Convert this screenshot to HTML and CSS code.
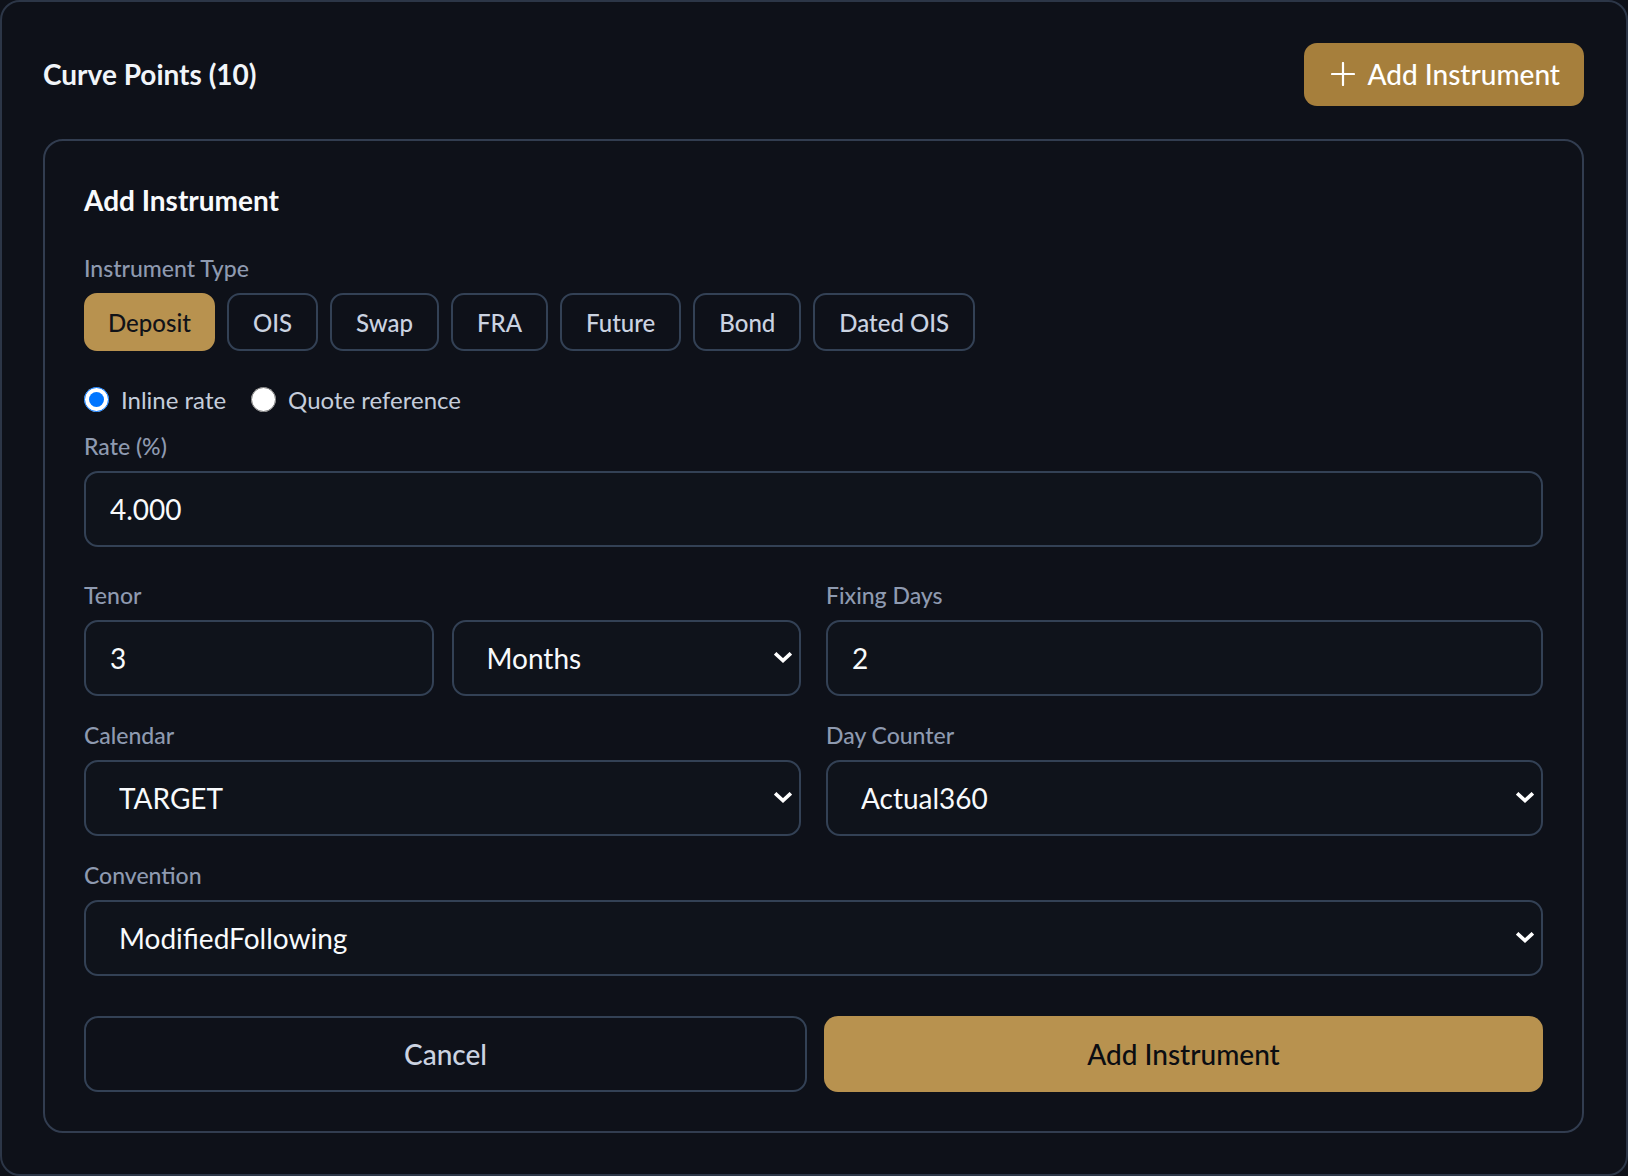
FILE: index.html
```html
<!DOCTYPE html>
<html lang="en">

<head>
    <meta charset="UTF-8">
    <meta name="viewport" content="width=device-width, initial-scale=1.0">
    <title>Curve Points</title>

    <link rel="stylesheet" href="styles.css">
</head>

<body>

    <div class="panel">
        <!-- Header -->
        <div class="panel-header">
            <h2 class="panel-title">Curve Points (10)</h2>
            <button class="btn-add-top">
                <svg class="plus-icon" viewBox="0 0 24 24" width="24" height="24" fill="none" stroke="currentColor" stroke-width="2.2" stroke-linecap="round">
                    <path d="M12 1v22M1 12h22" />
                </svg>
                Add Instrument
            </button>
        </div>

        <!-- Add Instrument Form -->
        <div class="form-card">
            <h3 class="form-title">Add Instrument</h3>

            <div class="field">
                <label class="field-label">Instrument Type</label>
                <div class="chip-row">
                    <button class="chip active">Deposit</button>
                    <button class="chip">OIS</button>
                    <button class="chip">Swap</button>
                    <button class="chip">FRA</button>
                    <button class="chip">Future</button>
                    <button class="chip">Bond</button>
                    <button class="chip">Dated OIS</button>
                </div>
            </div>

            <div class="radio-row">
                <label class="radio-option">
                    <input type="radio" name="rate-mode" checked>
                    Inline rate
                </label>
                <label class="radio-option">
                    <input type="radio" name="rate-mode">
                    Quote reference
                </label>
            </div>

            <div class="field rate-field">
                <label class="field-label">Rate (%)</label>
                <input class="text-input" type="text" value="4.000">
            </div>

            <div class="form-grid">
                <div class="field">
                    <label class="field-label">Tenor</label>
                    <div class="tenor-pair">
                        <input class="text-input" type="text" value="3">
                        <div class="select-wrap">
                            <select class="select-input">
                                <option>Months</option>
                                <option>Days</option>
                                <option>Weeks</option>
                                <option>Years</option>
                            </select>
                            <svg class="chevron" viewBox="0 0 18 11" width="18" height="11" fill="none" stroke="currentColor" stroke-width="3.6" stroke-linecap="square">
                                <path d="M2.5 2.5L9 8.5L15.5 2.5" />
                            </svg>
                        </div>
                    </div>
                </div>

                <div class="field">
                    <label class="field-label">Fixing Days</label>
                    <input class="text-input" type="text" value="2">
                </div>

                <div class="field">
                    <label class="field-label">Calendar</label>
                    <div class="select-wrap">
                        <select class="select-input">
                            <option>TARGET</option>
                        </select>
                        <svg class="chevron" viewBox="0 0 18 11" width="18" height="11" fill="none" stroke="currentColor" stroke-width="3.6" stroke-linecap="square">
                            <path d="M2.5 2.5L9 8.5L15.5 2.5" />
                        </svg>
                    </div>
                </div>

                <div class="field">
                    <label class="field-label">Day Counter</label>
                    <div class="select-wrap">
                        <select class="select-input">
                            <option>Actual360</option>
                        </select>
                        <svg class="chevron" viewBox="0 0 18 11" width="18" height="11" fill="none" stroke="currentColor" stroke-width="3.6" stroke-linecap="square">
                            <path d="M2.5 2.5L9 8.5L15.5 2.5" />
                        </svg>
                    </div>
                </div>

                <div class="field full">
                    <label class="field-label">Convention</label>
                    <div class="select-wrap">
                        <select class="select-input">
                            <option>ModifiedFollowing</option>
                        </select>
                        <svg class="chevron" viewBox="0 0 18 11" width="18" height="11" fill="none" stroke="currentColor" stroke-width="3.6" stroke-linecap="square">
                            <path d="M2.5 2.5L9 8.5L15.5 2.5" />
                        </svg>
                    </div>
                </div>
            </div>

            <!-- Actions -->
            <div class="form-actions">
                <button class="btn-cancel">Cancel</button>
                <button class="btn-submit">Add Instrument</button>
            </div>
        </div>
    </div>

</body>

</html>
```

FILE: styles.css
```css
/* General Styling */
body {
    font-family: 'Lato', 'Open Sans', sans-serif;
    background-color: #0e1119;
    margin: 0;
    padding: 0;
    color: #f1f5f9;
}

button,
input,
select {
    font-family: inherit;
}

/* Outer Panel */
.panel {
    box-sizing: border-box;
    height: 1176px;
    padding: 41px 42px 41px 41px;
    border: 2px solid #2c3647;
    border-radius: 20px;
    background-color: #0e1119;
}

.panel-header {
    display: flex;
    justify-content: space-between;
    align-items: center;
    height: 62px;
    margin-bottom: 34px;
}

.panel-title {
    margin: 0;
    font-size: 28px;
    font-weight: 700;
    color: #f1f5f9;
}

.btn-add-top {
    display: flex;
    align-items: center;
    gap: 12px;
    height: 63px;
    padding: 0 24px 0 27px;
    border: none;
    border-radius: 13px;
    background-color: #a67f3c;
    color: #ffffff;
    font-size: 28px;
    font-weight: 500;
    cursor: pointer;
}

/* Form Card */
.form-card {
    display: flex;
    flex-direction: column;
    padding: 39px;
    border: 2px solid #323d50;
    border-radius: 20px;
}

.form-title {
    margin: 0 0 31px;
    font-size: 28px;
    line-height: 40px;
    font-weight: 700;
    color: #f8fafc;
}

.field {
    display: flex;
    flex-direction: column;
    gap: 8px;
}

.field-label {
    font-size: 23px;
    line-height: 34px;
    font-weight: 500;
    color: #8e9ab0;
}

/* Instrument Type Chips */
.chip-row {
    display: flex;
    gap: 12px;
}

.chip {
    height: 58px;
    padding: 0 24px;
    border: 2px solid #334155;
    border-radius: 13px;
    background-color: transparent;
    color: #cbd3e1;
    font-size: 24px;
    font-weight: 500;
    cursor: pointer;
}

.chip.active {
    padding: 0 22px;
    border-color: #b8924f;
    background-color: #b8924f;
    color: #111318;
}

/* Radio Options */
.radio-row {
    display: flex;
    align-items: center;
    gap: 25px;
    height: 34px;
    margin-top: 31px;
}

.radio-option {
    display: flex;
    align-items: center;
    gap: 12px;
    font-size: 24px;
    color: #c5cddb;
}

.radio-option input {
    width: 25px;
    height: 25px;
    margin: 0;
}

.rate-field {
    margin-top: 13px;
}

/* Inputs */
.text-input,
.select-input {
    box-sizing: border-box;
    width: 100%;
    height: 76px;
    border: 2px solid #334155;
    border-radius: 14px;
    background-color: #0f131b;
    color: #f8fafc;
    font-size: 28px;
    outline: none;
}

.text-input {
    padding: 0 24px;
}

.select-input {
    appearance: none;
    -webkit-appearance: none;
    padding: 0 40px 0 33px;
}

.select-wrap {
    position: relative;
}

.chevron {
    position: absolute;
    right: 9px;
    top: 32px;
    color: #ffffff;
    pointer-events: none;
}

/* Grid */
.form-grid {
    display: grid;
    grid-template-columns: 1fr 1fr;
    column-gap: 25px;
    row-gap: 22px;
    margin-top: 31px;
}

.form-grid .full {
    grid-column: 1 / -1;
}

.tenor-pair {
    display: grid;
    grid-template-columns: 1fr 1fr;
    gap: 18px;
}

/* Actions */
.form-actions {
    display: flex;
    gap: 17px;
    margin-top: 40px;
}

.btn-cancel,
.btn-submit {
    flex: 1;
    height: 76px;
    border-radius: 14px;
    font-size: 28px;
    font-weight: 500;
    cursor: pointer;
}

.btn-cancel {
    border: 2px solid #334155;
    background-color: transparent;
    color: #cbd3e1;
}

.btn-submit {
    border: none;
    background-color: #b8924f;
    color: #0b0d12;
}
```
